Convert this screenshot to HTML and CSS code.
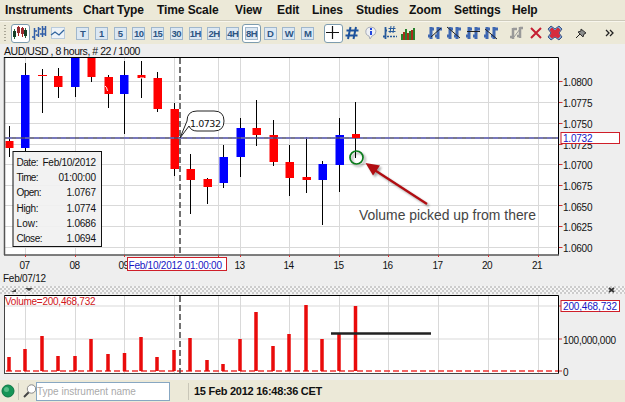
FILE: index.html
```html
<!DOCTYPE html>
<html lang="en">
<head>
<meta charset="UTF-8">
<meta name="viewport" content="width=device-width, initial-scale=1.0">
<title>AUD/USD Chart</title>
<link rel="stylesheet" href="styles.css">
</head>
<body>

<div class="app">
    <nav class="menu">
        <span class="w78">Instruments</span>
        <span class="w74">Chart Type</span>
        <span class="w78">Time Scale</span>
        <span class="w42">View</span>
        <span class="w35">Edit</span>
        <span class="w44">Lines</span>
        <span class="w53">Studies</span>
        <span class="w45">Zoom</span>
        <span class="w58">Settings</span>
        <span>Help</span>
    </nav>

    <div class="toolbar">
        <div class="grip"></div>
        <div class="group types">
            <button class="tool selected"><svg width="16" height="16"><path d="M2.5 4v10M13.5 3v10" stroke="#263"/><path d="M1 6h3v6H1zM12 5h3v6h-3z" fill="#163f26"/><path d="M6.5 1v10M10.5 2v10" stroke="#a22"/><path d="M5 2h3v6H5zM9 3h3v6H9z" fill="#982b30"/></svg></button>
            <button class="tool"><svg width="16" height="16"><path d="M3.500 3v12M1 12h3M3 6h3M7.500 2v10M5 10h3M7 4h3M11.500 1v11M9 9h3M12 4h2M14.500 1v10M12 9h3" fill="none" stroke="#315fa8" stroke-width="1.500"/></svg></button>
            <button class="tool"><svg width="16" height="16"><rect x="1.500" y="2.500" width="13" height="11" fill="#edf3f8" stroke="#b9cbdc"/><path d="M1 10l4-3 4 3 5-5" fill="none" stroke="#32669f" stroke-width="1.300"/></svg></button>
        </div>
        <div class="group periods">
            <button class="tool"><b>T</b></button>
            <button class="tool"><b>1</b></button>
            <button class="tool"><b>5</b></button>
            <button class="tool"><b>10</b></button>
            <button class="tool"><b>15</b></button>
            <button class="tool"><b>30</b></button>
            <button class="tool"><b>1H</b></button>
            <button class="tool"><b>2H</b></button>
            <button class="tool"><b>4H</b></button>
            <button class="tool selected"><b>8H</b></button>
            <button class="tool"><b>D</b></button>
            <button class="tool"><b>W</b></button>
            <button class="tool"><b>M</b></button>
        </div>
        <div class="group tools">
            <button class="tool selected"><svg width="16" height="16"><path d="M1 7.500h13M7.500 1v13" stroke="#111" stroke-width="1.200"/></svg></button>
            <button class="tool"><svg width="16" height="16"><path d="M6.500 2L4 14M12 2L9.500 14M2.500 5.500h12M1.500 10.500h12" stroke="#1d529c" stroke-width="2"/></svg></button>
            <button class="tool"><svg width="16" height="16"><path d="M3 5q1-3 5-3t5 4q0 4-4 5l-2 3-1-3q-4-1-3-6z" fill="#eef0f5" stroke="#a8adba"/><path d="M8 3v2M8 6v4" stroke="#2347dc" stroke-width="2"/></svg></button>
            <button class="tool"><svg width="16" height="16"><path d="M3.500 2v12M1 11.500h3M3 5.500h2" stroke="#285b9b" stroke-width="1.800"/><path d="M9 1L8 8M12 1l-1 7M6.500 3.500h7M6.500 6.500h7" stroke="#285b9b"/><path d="M5 11.500h10" stroke="#285b9b" stroke-width="1.500" stroke-dasharray="2 1"/></svg></button>
            <button class="tool"><svg width="16" height="16"><path d="M1 9h2v6H1zM5 4h2v11H5zM9 6h2v9H9zM13 3h2v12h-2z" fill="#27822c"/><path d="M3 7h2v8H3zM7 8h2v7H7zM11 5h2v10h-2z" fill="#a62d1c"/></svg></button>
        </div>
        <div class="group patterns">
            <button class="tool"><svg width="16" height="16"><use href="#bars"/><path d="M4 12L14 3" stroke="#222"/></svg></button>
            <button class="tool"><svg width="16" height="16"><use href="#bars"/><path d="M1 2l13 11" stroke="#222"/></svg></button>
            <button class="tool"><svg width="16" height="16"><use href="#bars"/><path d="M2 6.500h13" stroke="#222"/></svg></button>
            <button class="tool"><svg width="16" height="16"><use href="#bars"/><path d="M2 4l12 10" stroke="#222"/></svg></button>
        </div>
        <div class="group remove">
            <button class="tool"><svg width="16" height="16"><path d="M4 3v11M1 12h3M4 4h4M11 2v11M8 11h3M11 3h3" stroke="#999" stroke-width="2.500"/><path d="M5 12l6-8" stroke="#999"/></svg></button>
            <button class="tool"><svg width="16" height="16"><path d="M3 3l10 10M13 3L3 13" stroke="#c51f32" stroke-width="2"/></svg></button>
            <button class="tool"><svg width="16" height="16"><path d="M4 1l4 3 4-3 3 3-3 4 3 4-3 3-4-3-4 3-3-3 3-4-3-4z" fill="#7ba0d0" stroke="#3b5687"/><path d="M5 3l3 3 3-3 2 2-2 3 2 3-2 2-3-2-3 2-2-2 2-3-2-3z" fill="#d62c3d" stroke="#d62c3d"/></svg></button>
        </div>
        <button class="tool pin"><svg width="16" height="16"><path d="M8 4l5 4-2 1-1 3-5-5 3-1z" fill="#8a8c8b" stroke="#333"/><path d="M3 13l4-4" stroke="#222"/></svg></button>
        <button class="tool more"><svg width="16" height="16"><path d="M4 5l3 3-3 3M8 5l3 3-3 3" fill="none" stroke="#222" stroke-width="1.300"/></svg></button>
    </div>

    <div class="chart-title">AUD/USD , 8 hours, # 22 / 1000</div>

    <!-- price chart -->
    <svg class="price" viewBox="0 57 625 229" width="625" height="229">
        <rect x="4" y="57" width="554" height="198" fill="#fff"/>
        <path class="grid" d="M5 81.500h552M5 102.500h552M5 123.500h552M5 144.500h552M5 164.500h552M5 185.500h552M5 205.500h552M5 226.500h552M5 247.500h552"/>
        <path class="grid" d="M25.500 58v197M75.500 58v197M124.500 58v197M174.500 58v197M218.500 58v197M240.500 58v197M289.500 58v197M339.500 58v197M388.500 58v197M438.500 58v197M488.500 58v197M538.500 58v197"/>
        <path class="wick" d="M9.500 126v31M25.500 63v88M42.500 69v44M58.500 68v30M75.500 58v39M91.500 58v24M108.500 75v33M124.500 61v73M141.500 61v37M157.500 72v40M174.500 103v73M190.500 154v60M207.500 178v26M223.500 145v43M240.500 118v59M256.500 100v46M273.500 120v46M289.500 145v51M306.500 137v56M322.500 161v64M339.500 118v74M355.500 102v56"/>
        <path class="up" d="M21 75h8.500v73H21zM71 58h8.500v29H71zM120 75h8.500v19H120zM219.500 157h8.500v26h-8.500zM236.500 128h8.500v29h-8.500zM318.500 164h8.500v16h-8.500zM335.500 135h8.500v30h-8.500z"/>
        <path class="down" d="M5.500 141h8v7h-8zM38 75h9v1h-9zM54 76h8.500v11H54zM87.500 58h8v19h-8zM104.500 77h8.500v17h-8.500zM137.500 75h8v3h-8zM153.500 78h8.500v31h-8.500zM170.500 109h8.500v60h-8.500zM186.500 169h8.500v11h-8.500zM203.500 179h8.500v8h-8.500zM252.500 128h8.500v7h-8.500zM269.500 135h8.500v27h-8.500zM285.500 162h8.500v16h-8.500zM302.500 177h8.500v3h-8.500z"/>
        <path d="M105 86q2 1 2.500 5M140 78h4" fill="none" stroke="#fff"/>
        <path d="M5 138h553" stroke="#4d4d69" stroke-width="1.600"/>
        <path d="M7 138h551" stroke="#7777e8" stroke-dasharray="5 4"/>
        <path class="down" d="M352 134h8v4h-8z"/>
        <path class="cursor" d="M180 58v197"/>

        <path d="M187 121q0-10 10-10h17q10 0 10 10t-10 10h-17q-6 0-8-5L180 138z" fill="#fff" stroke="#222"/>
        <text x="190" y="127" textLength="31" class="verdana">1.0732</text>

        <rect x="13" y="151.500" width="88.500" height="95" fill="#f1f1f1" fill-opacity=".92" stroke="#111"/>
        <g>
            <text x="16.500" y="165.500" textLength="22">Date:</text><text x="42.500" y="165.500" textLength="53.500">Feb/10/2012</text>
            <text x="16.500" y="181" textLength="22">Time:</text><text x="58.500" y="181" textLength="37.500">01:00:00</text>
            <text x="16.500" y="196" textLength="25">Open:</text><text x="66.500" y="196" textLength="29.500">1.0767</text>
            <text x="16.500" y="211.500" textLength="22">High:</text><text x="66.500" y="211.500" textLength="29.500">1.0774</text>
            <text x="16.500" y="226.500" textLength="21.500">Low:</text><text x="66.500" y="226.500" textLength="29.500">1.0686</text>
            <text x="16.500" y="241.500" textLength="26">Close:</text><text x="66.500" y="241.500" textLength="29.500">1.0694</text>
        </g>

        <path d="M4.500 57v198" stroke="#555" stroke-width="1.500"/>
        <path d="M4 57.500h554.500V255" fill="none" stroke="#000"/>
        <path d="M4 255h555" stroke="#555" stroke-width="1.300"/>
        <path class="tick" d="M559 81.500h3.500M559 102.500h3.500M559 123.500h3.500M559 144.500h3.500M559 164.500h3.500M559 185.500h3.500M559 205.500h3.500M559 226.500h3.500M559 247.500h3.500"/>
        <path class="tick" d="M25.500 255v2M75.500 255v2M124.500 255v2M174.500 255v2M218.500 255v2M240.500 255v2M289.500 255v2M339.500 255v2M388.500 255v2M438.500 255v2M488.500 255v2M538.500 255v2"/>

        <g>
            <text x="563" y="86" textLength="29.500">1.0800</text>
            <text x="563" y="106.500" textLength="29.500">1.0775</text>
            <text x="563" y="128" textLength="29.500">1.0750</text>
            <text x="563" y="148.500" textLength="29.500">1.0725</text>
            <text x="563" y="169" textLength="29.500">1.0700</text>
            <text x="563" y="189.500" textLength="29.500">1.0675</text>
            <text x="563" y="210.500" textLength="29.500">1.0650</text>
            <text x="563" y="231" textLength="29.500">1.0625</text>
            <text x="563" y="251.500" textLength="29.500">1.0600</text>
        </g>
        <rect class="tag" x="561" y="132.500" width="58.500" height="11"/>
        <text class="blue" x="563" y="142" textLength="29.500">1.0732</text>

        <g>
            <text x="19.500" y="268.500" textLength="10.500">07</text>
            <text x="69.500" y="268.500" textLength="10.500">08</text>
            <text x="118.500" y="268.500" textLength="10.500">09</text>
            <text x="234.500" y="268.500" textLength="10.500">13</text>
            <text x="283.500" y="268.500" textLength="10.500">14</text>
            <text x="333.500" y="268.500" textLength="10.500">15</text>
            <text x="382.500" y="268.500" textLength="10.500">16</text>
            <text x="432.500" y="268.500" textLength="10.500">17</text>
            <text x="482" y="268.500" textLength="10.500">20</text>
            <text x="532" y="268.500" textLength="10.500">21</text>
            <text x="3" y="281.500" textLength="43">Feb/07/12</text>
        </g>
        <rect class="tag" x="127.500" y="257.500" width="99" height="13"/>
        <text class="blue" x="128.500" y="268.500" textLength="93.500">Feb/10/2012 01:00:00</text>

        <g class="note">
            <circle cx="356.500" cy="157.500" r="6.500" fill="none" stroke="#0b7d1c" stroke-width="1.700"/>
            <path d="M373 169l54 35" stroke="#b10d12" stroke-width="2.300"/>
            <path d="M365.500 163l14.500 2.500-7 10z" fill="#b10d12"/>
        </g>
        <text class="note-text" x="359" y="220" textLength="177" lengthAdjust="spacingAndGlyphs">Volume picked up from there</text>
    </svg>

    <div class="splitter">
        <svg width="26" height="8"><path d="M3 6l5-3v3zM17 2h8l-4 3z" fill="#444"/></svg>
        <svg width="10" height="8"><path d="M2 2l5 4M7 2L2 6" stroke="#333" stroke-width="1.700"/></svg>
    </div>

    <!-- volume chart -->
    <svg class="volume" viewBox="0 294 625 86" width="625" height="86">
        <rect x="4" y="295" width="554" height="78" fill="#fff"/>
        <path class="grid" d="M5 306h552M5 339h552M25.500 296v77M75.500 296v77M124.500 296v77M174.500 296v77M218.500 296v77M240.500 296v77M289.500 296v77M339.500 296v77M388.500 296v77M438.500 296v77M488.500 296v77M538.500 296v77"/>
        <path d="M6 371h552" stroke="#e33" stroke-width="1.300" stroke-dasharray="6 3"/>
        <path class="bars" d="M9 371v-14M25 371v-22M42 371v-35M58 371v-15M75 371v-15M91 371v-32M108 371v-17M124.500 371v-18M141 371v-34M157 371v-14M174 371v-21M190 371v-33M207 371v-11M223 371v-7M240 371v-32M256 371v-59M273 371v-25M289 371v-37M306 371v-66M322 371v-32M339 371v-37M355.500 371v-65"/>
        <path class="cursor" d="M180 296v77"/>
        <path d="M331 333.500h100" stroke="#222" stroke-width="2.500"/>
        <path d="M4 295.500h554.500V373" fill="none" stroke="#000"/>
        <path d="M4.500 295v78M4 373.500h555" fill="none" stroke="#444"/>
        <path class="tick" d="M559 306h3M559 339h3M559 371h3"/>
        <text class="red" x="5" y="304.500" textLength="90.500">Volume=200,468,732</text>
        <rect class="tag" x="561" y="300.500" width="58.500" height="11"/>
        <text class="blue" x="563" y="310" textLength="54">200,468,732</text>
        <text x="563" y="343.500" textLength="53">100,000,000</text>
        <text x="563" y="375.500">0</text>
    </svg>

    <footer class="status">
        <svg class="led" width="14" height="14"><circle cx="7" cy="7" r="6" fill="#159557" stroke="#0b7543"/><circle cx="5.500" cy="5.500" r="2.500" fill="#56bd87"/></svg>
        <div class="separator"></div>
        <svg class="search" width="14" height="16"><path d="M1 14l5-5" stroke="#444" stroke-width="2"/><circle cx="8.500" cy="6" r="4.200" fill="#fff" stroke="#888"/></svg>
        <input type="text" placeholder="Type instrument name">
        <div class="separator second"></div>
        <strong>15 Feb 2012 16:48:36 CET</strong>
    </footer>
</div>

<svg class="defs" width="0" height="0">
    <g id="bars"><path d="M4 2v12M1 11h3M4 4h3M11 2v12M8 11h3M11 4h4" stroke="#3f68b2" stroke-width="3"/></g>
</svg>

</body>
</html>
```
FILE: styles.css
```css
body {
    margin: 0;
    font-family: "Liberation Sans", Arial, sans-serif;
    font-size: 11px;
    color: #111;
    background-color: #eee;
    overflow: hidden;
}
.app {
    display: flex;
    flex-direction: column;
    width: 625px;
    height: 402px;
}
.app svg {
    display: block;
    flex: none;
}
.defs {
    display: none;
}
.menu {
    display: flex;
    box-sizing: border-box;
    height: 21px;
    padding-left: 5px;
    background-color: #ece9d8;
    border-bottom: 1px solid #cdcabb;
    font-size: 12px;
    font-weight: bold;
    line-height: 20px;
    letter-spacing: -0.1px;
    white-space: nowrap;
}
.w78 { width: 78px; }
.w74 { width: 74px; }
.w42 { width: 42px; }
.w35 { width: 35px; }
.w44 { width: 44px; }
.w53 { width: 53px; }
.w45 { width: 45px; }
.w58 { width: 58px; }
.toolbar {
    display: flex;
    align-items: center;
    box-sizing: border-box;
    height: 23px;
    padding-left: 4px;
    background-color: #ece9d8;
    border-top: 1px solid #f8f6ed;
}
.grip {
    width: 2px;
    height: 16px;
    margin-right: 5px;
    background: repeating-linear-gradient(#aaa797 0 1px, #ece9d8 1px 3px);
}
.group {
    display: flex;
}
.tool {
    display: flex;
    align-items: center;
    justify-content: center;
    flex: none;
    box-sizing: border-box;
    width: 18.75px;
    height: 19px;
    padding: 0;
    border: 1px solid transparent;
    background: none;
}
.tool.selected {
    border-color: #7d9caf;
    border-radius: 3px;
    background-color: #fff;
}
.tool b {
    box-sizing: border-box;
    flex: none;
    width: 13px;
    height: 13px;
    border: 1px solid #a0b7cc;
    background-color: #dce8f3;
    color: #2d5583;
    font-size: 9.5px;
    line-height: 11px;
    letter-spacing: -0.5px;
    text-align: center;
}
.periods {
    margin-left: 6px;
}
.tools {
    margin-left: 7px;
}
.patterns {
    margin-left: 8px;
}
.remove {
    margin-left: 7px;
}
.pin {
    margin-left: 8px;
}
.more {
    margin-left: 10px;
}
.chart-title {
    height: 13px;
    padding-left: 4px;
    font-size: 10.5px;
    line-height: 14px;
    letter-spacing: -0.45px;
    white-space: pre;
}
.app text {
    font-size: 10px;
    fill: #111;
}
.app .verdana {
    font-family: "DejaVu Sans", sans-serif;
    font-size: 9.5px;
}
.app .blue {
    fill: #1616c4;
}
.app .red {
    fill: #d01520;
}
.app .note-text {
    font-size: 14px;
    fill: #444;
}
.grid {
    stroke: #d9d9d9;
}
.wick {
    stroke: #000;
}
.up {
    fill: #00f;
}
.down {
    fill: #f00;
}
.cursor {
    stroke: #444;
    stroke-width: 1.5;
    stroke-dasharray: 6 3;
}
.tick {
    stroke: #c33;
}
.tag {
    fill: #fff;
    stroke: #cf1e28;
}
.note {
    filter: drop-shadow(2px 2px 1px rgba(0, 0, 0, 0.35));
}
.bars {
    stroke: #e90b0b;
    stroke-width: 3.5;
}
.splitter {
    display: flex;
    justify-content: space-between;
    height: 8px;
    padding: 0 8px;
    background: repeating-conic-gradient(#ccc 0 25%, #f5f5f5 0 50%) 0 0 / 4px 4px;
}
.status {
    display: flex;
    align-items: center;
    height: 22px;
    background-color: #ece9d8;
}
.led {
    margin-left: 1px;
}
.separator {
    width: 1px;
    height: 17px;
    margin: 0 4px 0 3px;
    background-color: #c9c6b8;
}
.status input {
    box-sizing: border-box;
    width: 134px;
    height: 19px;
    margin-left: -1px;
    padding: 0;
    border: 1px solid #87a7c2;
    background-color: #fff;
    font-family: inherit;
    font-size: 10px;
}
.status input::placeholder {
    color: #aaa;
}
.status .second {
    margin: 0 5px 0 18px;
}
.status strong {
    font-size: 11px;
    letter-spacing: -0.27px;
}
```
